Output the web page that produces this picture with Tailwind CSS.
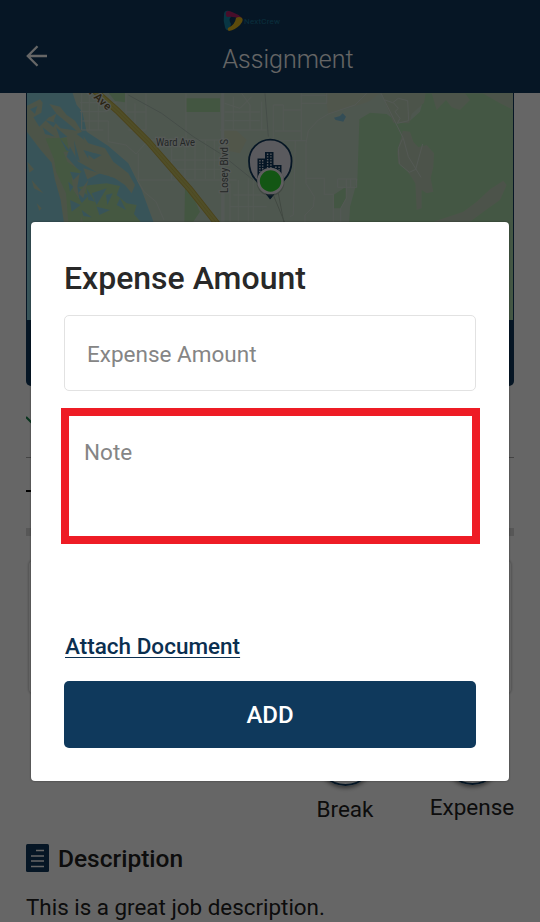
<!DOCTYPE html>
<html lang="en">
<head>
  <meta charset="UTF-8" />
  <meta name="viewport" content="width=device-width, initial-scale=1.0" />
  <title>Assignment - NextCrew</title>
  <script src="https://cdn.jsdelivr.net/npm/@tailwindcss/browser@4"></script>
</head>
<body class="relative h-[922px] overflow-hidden bg-white font-['Roboto',sans-serif] text-[#222]">

  <header class="flex h-[93px] flex-col bg-[#0f395c] pt-[10px]">
    <div class="flex h-[22px] items-center gap-px pl-[223px]">
      <svg class="h-[22px] w-[20px]" viewBox="0 0 20 22">
        <path d="M1 5Q1 0 6 1L8 7Q5 9 8 14L6 20Q3 21 2 17Q0 11 1 5Z" fill="#1687a8" />
        <path d="M3 2Q5 0 9 2Q15 4 19 8L16 9Q11 6 4 7Q2 5 3 2Z" fill="#b42369" />
        <path d="M19 8Q21 11 17 15Q12 20 6 21Q4 20 5 18Q12 15 13 8Q16 6 19 8Z" fill="#e5b91c" />
      </svg>
      <span class="w-[37px] pt-[2px] text-[8px] tracking-[0.2px] text-[#1a7599]">NextCrew</span>
    </div>
    <div class="grid h-[54px] w-full grid-cols-[74px_1fr_74px] items-center">
      <svg class="ml-[26px] h-[22px] w-[22px] -translate-y-[3px]" viewBox="0 0 22 22" fill="none" stroke="#fff" stroke-width="2.3">
        <path d="M21 11H2M11.5 1.3L1.8 11l9.7 9.7" />
      </svg>
      <h1 class="pl-[36px] pt-[2px] text-center text-[25px] font-light text-white">Assignment</h1>
    </div>
  </header>

  <main class="px-[26px]">
    <section class="h-[293px] overflow-hidden rounded-b-[5px] bg-[#0f395c] px-px">
      <svg class="h-[227px] w-full" viewBox="27 93 486 227" preserveAspectRatio="none">
        <rect x="27" y="93" width="486" height="227" fill="#c4d9c6" />
        <!-- river and islands -->
        <g transform="translate(20 90) scale(.33333)">
          <path d="M0 0H155L170 45L187 65L200 125L265 168L325 220L365 300L402 400V700H0Z" fill="#8dd2df" />
          <path d="M20 48L60 28L68 38L64 68L40 82L58 110L88 80L122 115L170 122L150 105L110 72L88 42L120 50L140 75L165 92L186 125L170 132L205 160L255 175L280 215L325 250L345 285L335 310L315 285L280 262L235 250L210 235L175 215L150 170L140 200L180 245L172 290L190 400H132L122 330L105 270L95 218L62 180L20 125Z" fill="#bdd3b4" />
          <path d="M76 145L140 143L148 185L130 185L142 215L185 245L155 265L160 300L190 345L180 400H145L138 310L108 245L102 208Z" fill="#acdba4" />
          <path d="M190 400L175 350L205 318L175 292L210 285L260 280L300 288L290 315L320 340L350 345L342 372L365 400Z" fill="#acdba4" />
          <g fill="#8dd2df">
            <path d="M30 58L52 48L45 72ZM75 90L108 98L100 112ZM68 112L105 140L75 132ZM108 112L142 140L120 145ZM120 145L155 190L138 180ZM162 150L180 215L167 205ZM150 245L180 250L160 270ZM200 295L225 335L205 330ZM215 310L260 295L230 345ZM258 315L278 310L262 345ZM150 330L182 345L155 365ZM230 350L270 360L238 375ZM145 275L160 290L150 305ZM190 180L245 195L210 215ZM185 360L215 382L190 378ZM300 325L318 360L290 345Z" />
          </g>
          <g fill="#bdd3b4">
            <path d="M22 215L42 238L28 248ZM35 270L70 310L42 295ZM85 85L110 70L100 95ZM190 138L225 190L200 180ZM250 225L310 270L270 260ZM190 235L240 250L202 268ZM205 270L190 325L175 310ZM205 195L225 210L205 225ZM50 340L65 355L58 362Z" />
          </g>
          <!-- parks -->
          <path d="M265 8H315V37L285 33ZM498 25H600V66H498ZM495 290L520 320L540 365L520 395H493Z" fill="#a9d7a4" />
          <path d="M612 120L650 122L680 150L660 190L615 180Z" fill="#cad6b8" />
          <!-- streets -->
          <g fill="none" stroke="#d0dfd3" stroke-width="3">
            <path d="M185 10V120H250M208 10V120M235 10V120M180 38H290M180 65H262M187 93H265V155L318 165L348 192L385 150H600M318 10V90M378 10V120H325M345 40V120M318 66H378M498 10V150M355 270H650M355 190V270M352 270L372 305L408 335L432 390M455 175V270M495 155V270M525 165V268M556 150V268M583 150V268M455 210H600M455 238H600M600 120H740M612 150V395M630 280V395M655 270V395M685 265V395M700 250V395M614 66H720M614 92H720M640 20V120M665 10L690 45V120M614 40L660 55L695 20M725 35V120M640 315H750M630 350H740" />
            <path d="M608 10V395" stroke="#d0ddd5" stroke-width="9" />
            <path d="M325 15L425 70L520 140L600 190L700 270M735 10L745 140" stroke="#acc0b4" stroke-width="3" />
          </g>
          <path d="M205 -15L292 62L385 155L485 270L510 298L592 402" fill="none" stroke="#bba946" stroke-width="20" />
          <path d="M205 -15L292 62L385 155L485 270L510 298L592 402" fill="none" stroke="#c8c462" stroke-width="14" />
          <path d="M205 -15L292 62L385 155L485 270L510 298L592 402" fill="none" stroke="#bcae4f" stroke-width="2" />
        </g>
        <!-- eastern hills -->
        <g transform="translate(270 90) scale(.33333)">
          <path d="M165 10H330L295 35L265 45L175 72Z" fill="#c8d6bf" />
          <path d="M268 88L300 68L350 72L385 98L420 92L450 65L465 10H740V700H220L240 350L262 270Z" fill="#aadaaa" />
          <path d="M335 10H467L462 38L425 72L418 100L370 98ZM485 10H585L600 30L570 60L545 52L528 30L500 60ZM638 10H740V65L690 40Z" fill="#bfd2b8" />
          <path d="M398 122L420 125L430 155L445 172L470 165L492 190L490 230L482 265L490 305L470 310L455 300V355L440 360L436 280L410 240L385 220L382 185Z" fill="#bfd0b8" />
          <path d="M490 395L580 365L620 335L660 298L700 272L710 285L690 330L655 355L600 395Z" fill="#bfd0b8" />
          <path d="M192 83L210 78L218 70L228 80L220 95L197 90Z" fill="#80c0d8" />
          <path d="M190 315L228 290L230 320L212 355H192Z" fill="#a9d7a7" />
          <g fill="none" stroke="#d0ddd3" stroke-width="3">
            <path d="M290 10L255 45L175 72L145 90L115 122L108 160V280L133 320L130 350L105 375V400M94 10V150M94 16H170M94 40H170V10M10 150V45H40V123M40 60H94M15 123H94M-20 152H108M108 265H163V313H190V400M203 267H260V292H203ZM229 267V325L212 355V400M242 267V292M76 152L70 375L60 380" />
            <path d="M333 10L400 145L415 200L453 262M345 30L368 38L385 25L413 32L416 92L382 100L390 85L375 65L385 55L370 38M398 145L385 175L388 222L418 247L437 238L458 162" />
          </g>
          <path d="M10 315L45 400M25 310L42 400" stroke="#a3b6a5" stroke-width="3" fill="none" />
        </g>
        <g font-family="Roboto" fill="#58615f" stroke="#d8e1db" stroke-width="2.500" paint-order="stroke">
          <text x="156" y="146" font-size="10.500" textLength="39" lengthAdjust="spacingAndGlyphs">Ward Ave</text>
          <text transform="translate(227.500 193) rotate(-90)" font-size="10.500" textLength="54" lengthAdjust="spacingAndGlyphs">Losey Blvd S</text>
          <text transform="translate(86 91) rotate(43)" font-size="11" font-weight="500" fill="#68552d" textLength="29">n Ave</text>
        </g>
        <!-- job site pin -->
        <path d="M270 198L256 180C250 174 249 168 249 161A21.300 21.300 0 0 1 291.600 161C291.600 168 290 174 284 180Z" fill="#e2e0ea" stroke="#0f395c" stroke-width="1.800" />
        <path d="M270.500 199L265 192H276Z" fill="#0f395c" />
        <path d="M257.500 158.500H265V152H273.500V165H281.500V178H257.500Z" fill="#0f395c" />
        <g stroke="#dce2ec" stroke-width="1.400" stroke-dasharray="1.400 1.300">
          <path d="M259.900 160V177M262.700 160V177M267.600 153.500V177M270.900 153.500V177M275.900 166.500V177M279.100 166.500V177" />
        </g>
        <circle cx="270.500" cy="182" r="14" fill="#65756b" opacity=".35" />
        <circle cx="270.500" cy="181" r="12" fill="#30d832" stroke="#eeebf0" stroke-width="2.600" />
      </svg>
    </section>

    <div class="flex h-[72px] items-center border-b border-[#aaa]">
      <svg class="h-4 w-6 -translate-y-[2px]" viewBox="0 0 24 16" fill="none" stroke="#18824c" stroke-width="2.200"><path d="M0 5l8 8L20 0" /></svg>
    </div>
    <div class="flex h-[70px] items-center">
      <span class="h-[2px] w-4 -translate-y-[2px] bg-black"></span>
    </div>
    <div class="h-[8px] bg-[#dadada]"></div>
    <section class="mx-[3px] mt-[25px] h-[132px] rounded-sm shadow-[0_0_3px_rgba(0,0,0,0.4)]"></section>

    <section class="ml-[276px] mt-[34px] flex h-[98px] w-[228px] justify-between">
      <div class="flex w-[86px] flex-col items-center">
        <span class="h-[59px] w-[59px] rounded-full border-2 border-[#0f395c] shadow-[0_2px_4px_rgba(0,0,0,0.5)]"></span>
        <span class="mt-[9px] text-[22.5px] leading-[28px]">Break</span>
      </div>
      <div class="flex w-[86px] -translate-x-[15px] flex-col items-center">
        <span class="h-[59px] w-[59px] -translate-y-px rounded-full border-2 border-[#0f395c] shadow-[0_2px_4px_rgba(0,0,0,0.5)]"></span>
        <span class="mt-[7px] text-[22.5px] leading-[28px]">Expense</span>
      </div>
    </section>

    <section class="mt-[18px]">
      <div class="flex h-[30px] items-center gap-[9px]">
        <svg class="h-[28px] w-[23px]" viewBox="0 0 23 28">
          <rect width="23" height="28" rx="1.500" fill="#0f395c" />
          <path d="M10 6.500H18M5 12H18M5 17H18M5 22.500H18" stroke="#fff" stroke-width="1.500" />
        </svg>
        <h2 class="pt-[2px] text-[24.5px] font-medium">Description</h2>
      </div>
      <p class="mt-[20px] whitespace-nowrap text-[22.4px] leading-[28px]">This is a great job description.</p>
    </section>
  </main>

  <!-- expense dialog -->
  <div class="absolute inset-0 bg-black/60 px-[31px] pt-[222px]">
    <div class="flex h-[559px] w-[478px] flex-col rounded-[4px] bg-white px-[33px] shadow-[0_0_2px_rgba(0,0,0,0.5)]">
      <h2 class="mt-[36px] text-[32px] font-medium leading-[40px] text-[#282828]">Expense Amount</h2>
      <div class="mt-[17px] flex h-[76px] w-[412px] items-center rounded-[5px] border border-[#e2e2e2] pl-[22px] pt-[4px] text-[22.5px] text-[#858585]">Expense Amount</div>
      <div class="-ml-[3px] mt-[17px] h-[136px] w-[419px] border-8 border-[#ee1c25] pl-[15px] pt-[22px] text-[22.5px] leading-[28px] text-[#858585]">Note</div>
      <a href="#" class="mt-[88px] w-max pl-px text-[22.5px] font-medium leading-[28px] text-[#0b2f50] underline decoration-1 underline-offset-[3px]">Attach Document</a>
      <button class="mt-[21px] h-[67px] w-[412px] rounded-[5px] bg-[#0f395c] text-[24px] font-medium text-white">ADD</button>
    </div>
  </div>

</body>
</html>
